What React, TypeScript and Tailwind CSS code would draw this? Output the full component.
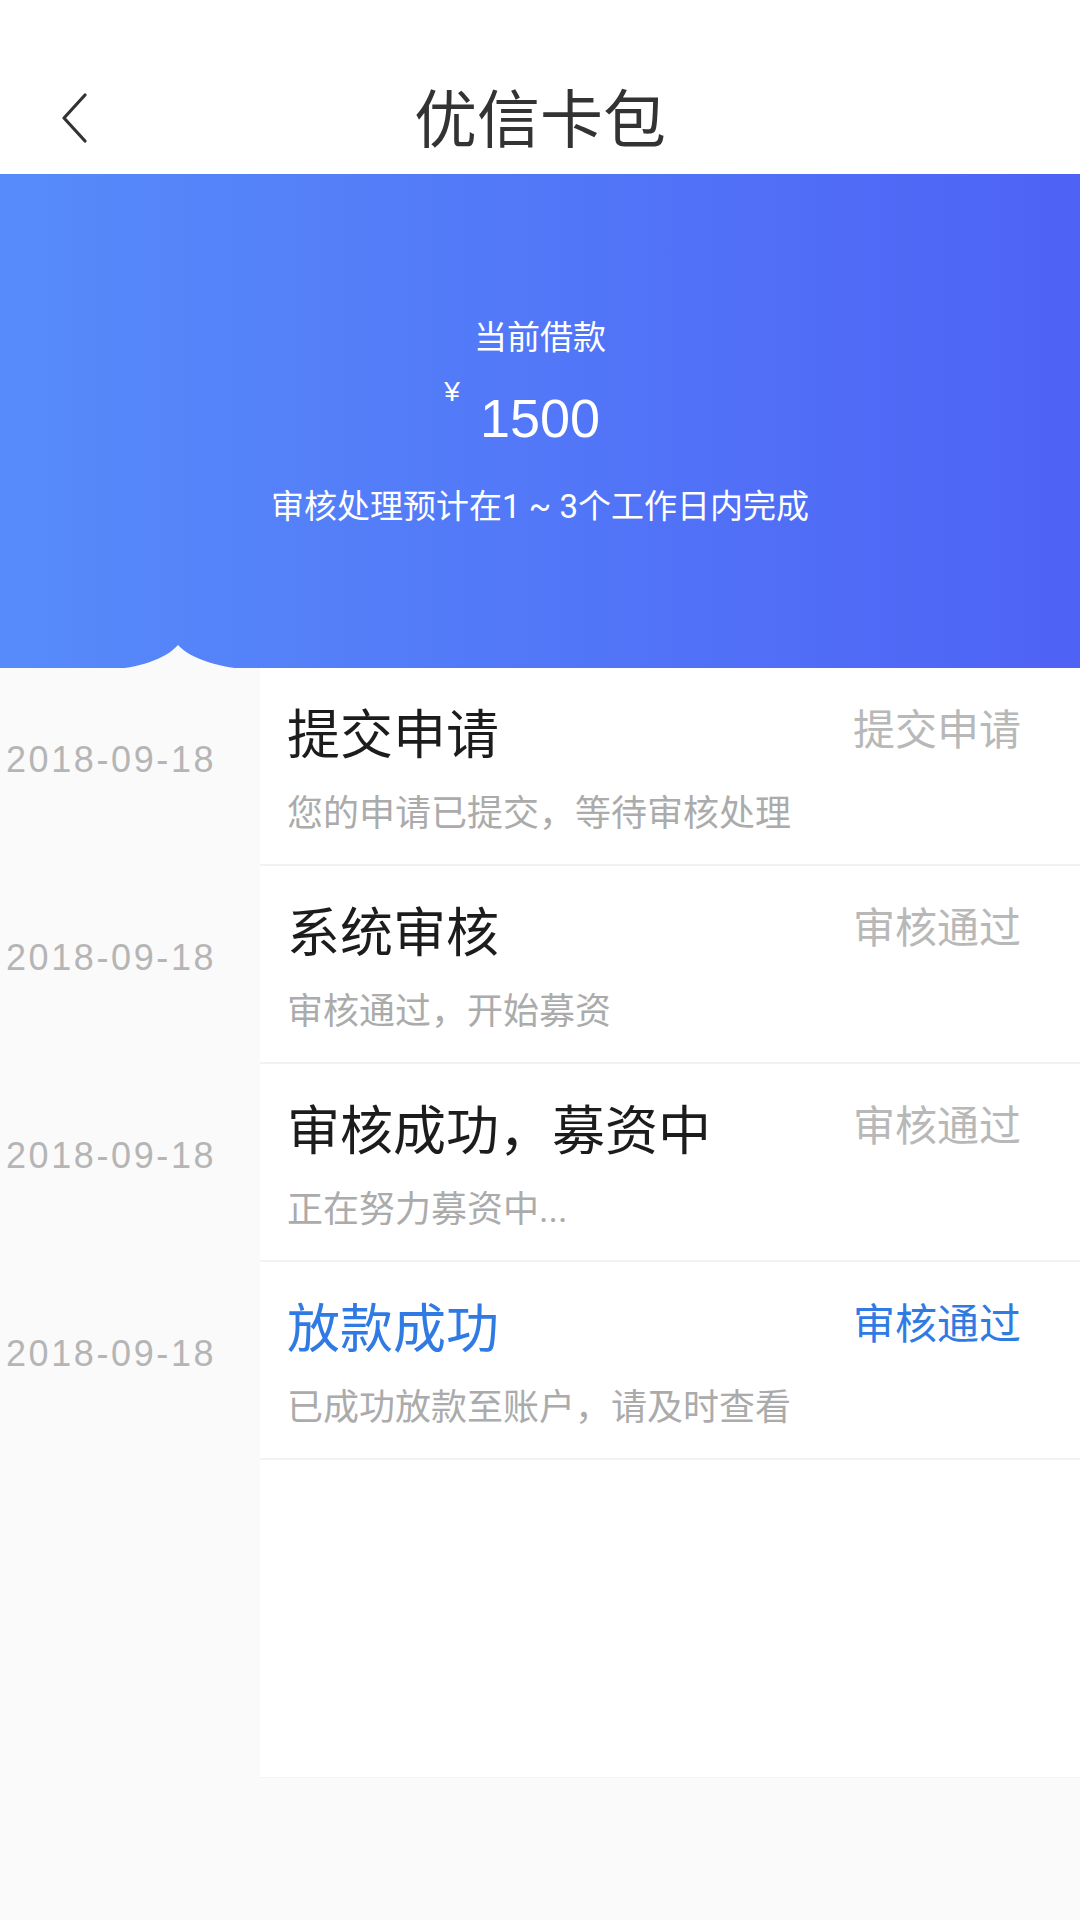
import React from 'react';

type Step = {
    date: string;
    title: string;
    desc: string;
    status: string;
    active?: boolean;
};

const STEPS: Step[] = [
    { date: '2018-09-18', title: '提交申请', desc: '您的申请已提交，等待审核处理', status: '提交申请' },
    { date: '2018-09-18', title: '系统审核', desc: '审核通过，开始募资', status: '审核通过' },
    { date: '2018-09-18', title: '审核成功，募资中', desc: '正在努力募资中...', status: '审核通过' },
    { date: '2018-09-18', title: '放款成功', desc: '已成功放款至账户，请及时查看', status: '审核通过', active: true },
];

const App: React.FC = () => {
    return (
        <div className="min-h-[1920px] w-full bg-[#fafafa] flex flex-col font-['Roboto','Noto_Sans_CJK_SC',sans-serif]">
            {/* Header */}
            <header className="h-[174px] bg-white flex flex-col justify-end">
                <div className="h-[108px] grid grid-cols-[1fr_auto_1fr] items-center">
                    <div className="pl-[60px] pb-[4px] flex items-center">
                        <svg width="28" height="50" viewBox="0 0 28 50" fill="none">
                            <polyline points="25,2 4,25 25,48" stroke="#333333" strokeWidth="3.2" strokeLinecap="round" strokeLinejoin="round" />
                        </svg>
                    </div>
                    <h1 className="text-[63px] leading-none text-[#333333] font-normal">优信卡包</h1>
                    <div />
                </div>
            </header>

            {/* Banner */}
            <section className="relative h-[494px] bg-gradient-to-r from-[#578bfa] to-[#4e62f5] flex flex-col items-center text-white">
                <p className="mt-[147px] text-[33px] leading-none">当前借款</p>
                <div className="mt-[37px] relative">
                    <span className="absolute right-full mr-[20px] -top-[13px] text-[28px] leading-none font-['Liberation_Sans',sans-serif]">¥</span>
                    <span className="text-[54px] leading-none font-['Liberation_Sans',sans-serif]">1500</span>
                </div>
                <p className="mt-[45px] text-[33px] leading-none">审核处理预计在1 ~ 3个工作日内完成</p>

                {/* bump pointing to the timeline column */}
                <svg className="absolute left-[110px] -bottom-px" width="140" height="24" viewBox="0 0 140 24">
                    <path d="M0 24 C 26 24 56 14 68 0 C 80 14 114 24 140 24 Z" fill="#fafafa" />
                </svg>
            </section>

            {/* Timeline */}
            <div className="flex flex-col">
                {STEPS.map((step, i) => (
                    <div key={i} className="flex h-[198px]">
                        <div className="w-[260px] bg-[#fafafa] flex items-center pl-[6px] pb-[14px]">
                            <span className="text-[36px] leading-none tracking-[2.6px] text-[#b5b5b5] font-['Liberation_Sans',sans-serif]">
                                {step.date}
                            </span>
                        </div>
                        <div className="flex-1 bg-white border-b-2 border-[#f2f2f2] flex justify-between items-start pl-[27px] pr-[59px] pt-[42px]">
                            <div className="flex flex-col">
                                <p className={`text-[53px] leading-none ${step.active ? 'text-[#2f7be3]' : 'text-[#1c1c1c]'}`}>
                                    {step.title}
                                </p>
                                <p className="mt-[33px] text-[36px] leading-none text-[#ababab]">{step.desc}</p>
                            </div>
                            <p className={`text-[42px] leading-none ${step.active ? 'text-[#2f7be3]' : 'text-[#b8b8b8]'}`}>
                                {step.status}
                            </p>
                        </div>
                    </div>
                ))}
                <div className="flex h-[318px]">
                    <div className="w-[260px] bg-[#fafafa]" />
                    <div className="flex-1 bg-white border-b border-[#f4f4f4]" />
                </div>
            </div>
        </div>
    );
};

export default App;
